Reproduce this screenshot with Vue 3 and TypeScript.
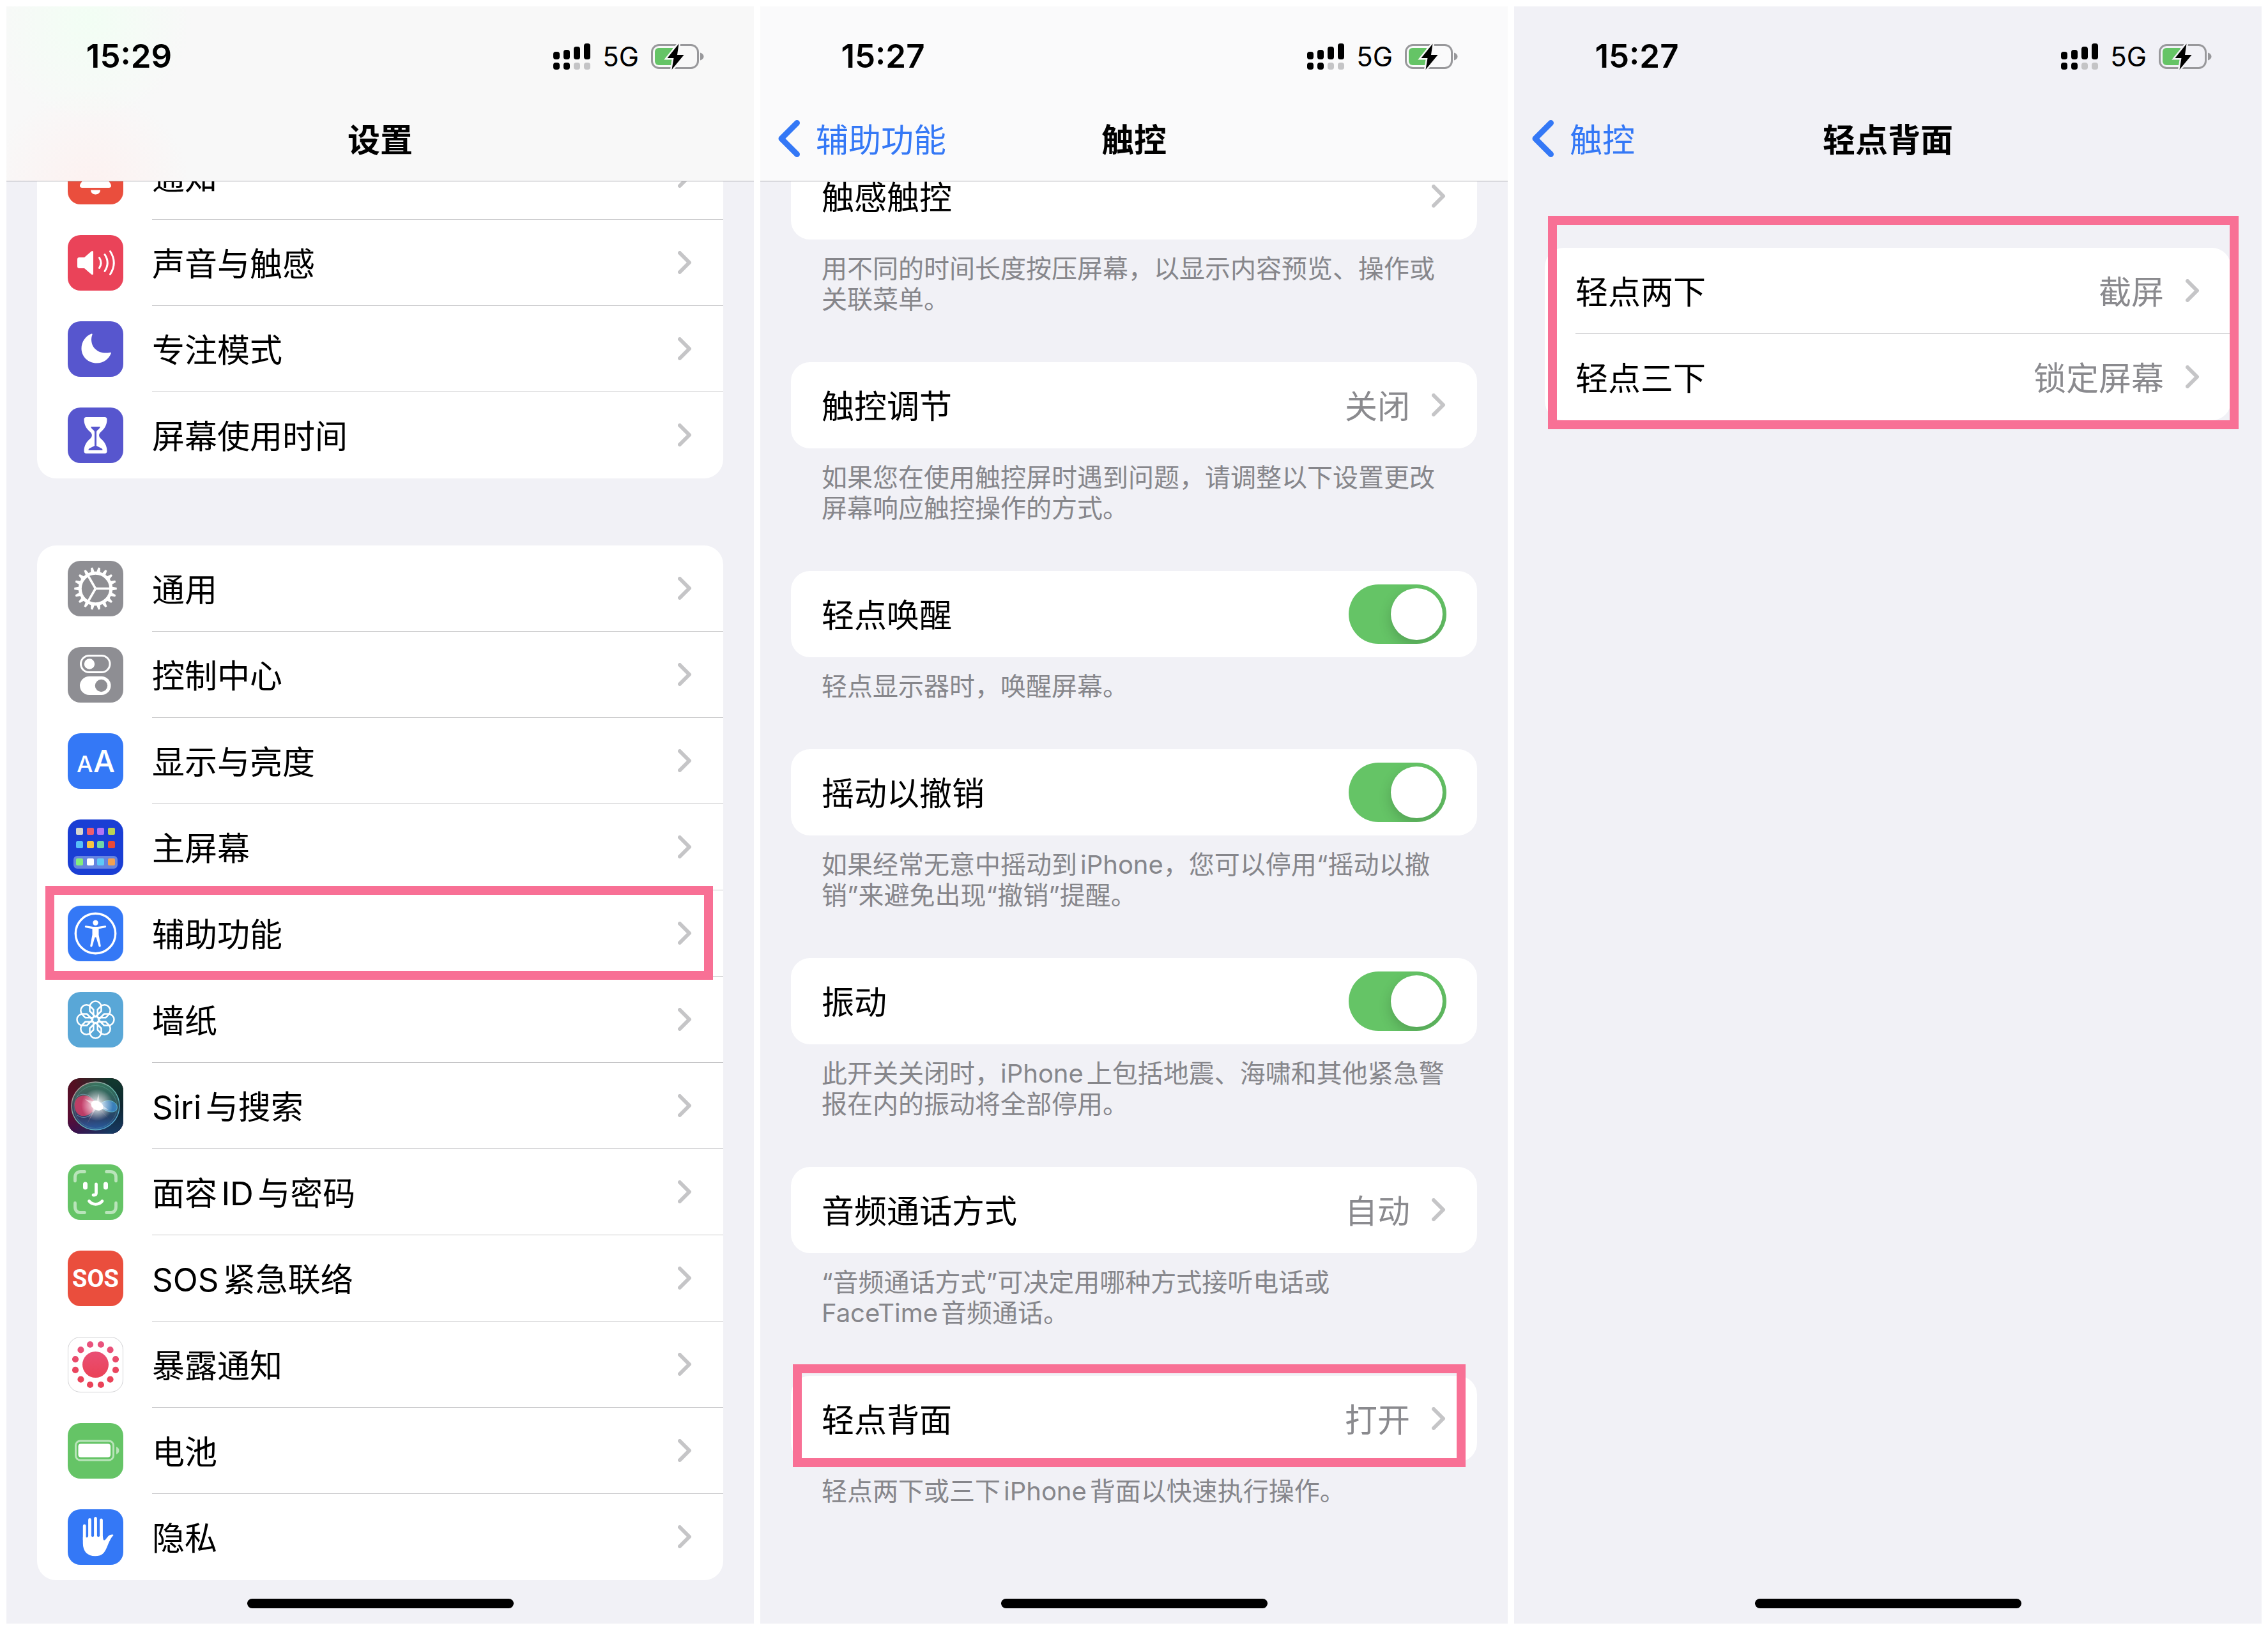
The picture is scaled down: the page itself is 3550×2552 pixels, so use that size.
<script setup lang="ts">
type IconName =
  | 'bell' | 'sound' | 'moon' | 'hourglass' | 'gear' | 'control' | 'display' | 'home'
  | 'access' | 'wallpaper' | 'siri' | 'faceid' | 'sos' | 'exposure' | 'battery' | 'hand'

interface Row {
  label: string
  icon?: IconName
  color?: string
  value?: string
  toggle?: boolean
  mark?: string
}

interface Group {
  rows: Row[]
  footer?: string
  mark?: string
}

interface Screen {
  id: string
  time: string
  title: string
  back?: string
  groups: Group[]
}

const screens: Screen[] = [
  {
    id: 'settings',
    time: '15:29',
    title: '设置',
    groups: [
      {
        rows: [
          { label: '通知', icon: 'bell', color: '#ea4e3d' },
          { label: '声音与触感', icon: 'sound', color: '#ea4359' },
          { label: '专注模式', icon: 'moon', color: '#5756ce' },
          { label: '屏幕使用时间', icon: 'hourglass', color: '#5756ce' },
        ],
      },
      {
        rows: [
          { label: '通用', icon: 'gear', color: '#8e8e93' },
          { label: '控制中心', icon: 'control', color: '#8e8e93' },
          { label: '显示与亮度', icon: 'display', color: '#3478f6' },
          { label: '主屏幕', icon: 'home', color: '#1a3ed4' },
          { label: '辅助功能', icon: 'access', color: '#3478f6', mark: 'mark-access' },
          { label: '墙纸', icon: 'wallpaper', color: '#59a7d7' },
          { label: 'Siri与搜索', icon: 'siri', color: '#1b1f36' },
          { label: '面容ID与密码', icon: 'faceid', color: '#65c466' },
          { label: 'SOS紧急联络', icon: 'sos', color: '#ea4e3d' },
          { label: '暴露通知', icon: 'exposure', color: '#ffffff' },
          { label: '电池', icon: 'battery', color: '#65c466' },
          { label: '隐私', icon: 'hand', color: '#3478f6' },
        ],
      },
    ],
  },
  {
    id: 'touch',
    time: '15:27',
    title: '触控',
    back: '辅助功能',
    groups: [
      { rows: [{ label: '触感触控' }], footer: '用不同的时间长度按压屏幕，以显示内容预览、操作或关联菜单。' },
      { rows: [{ label: '触控调节', value: '关闭' }], footer: '如果您在使用触控屏时遇到问题，请调整以下设置更改屏幕响应触控操作的方式。' },
      { rows: [{ label: '轻点唤醒', toggle: true }], footer: '轻点显示器时，唤醒屏幕。' },
      { rows: [{ label: '摇动以撤销', toggle: true }], footer: '如果经常无意中摇动到iPhone，您可以停用“摇动以撤销”来避免出现“撤销”提醒。' },
      { rows: [{ label: '振动', toggle: true }], footer: '此开关关闭时，iPhone上包括地震、海啸和其他紧急警报在内的振动将全部停用。' },
      { rows: [{ label: '音频通话方式', value: '自动' }], footer: '“音频通话方式”可决定用哪种方式接听电话或\nFaceTime音频通话。' },
      { rows: [{ label: '轻点背面', value: '打开' }], footer: '轻点两下或三下iPhone背面以快速执行操作。', mark: 'mark-back' },
    ],
  },
  {
    id: 'backtap',
    time: '15:27',
    title: '轻点背面',
    back: '触控',
    groups: [
      {
        rows: [
          { label: '轻点两下', value: '截屏' },
          { label: '轻点三下', value: '锁定屏幕' },
        ],
        mark: 'mark-taps',
      },
    ],
  },
]

const teeth = Array.from({ length: 18 }, (_, i) => i * 20)
const spokes = [0, 120, 240]
const petals = Array.from({ length: 8 }, (_, i) => i * 45)
const dots = Array.from({ length: 12 }, (_, i) => 15 + i * 30)
const tileX = [13, 30, 46, 63]
const tiles = [
  { y: 13, colors: ['#d6d6ce', '#ee5d6c', '#b074f5', '#b9d253'] },
  { y: 34, colors: ['#58bff8', '#f6c344', '#70d6a6', '#e9493a'] },
  { y: 61, colors: ['#83ee7c', '#ffffff', '#5ec9f8', '#f3a152'] },
]
</script>

<template>
  <div class="board">
    <section v-for="screen in screens" :key="screen.id" class="phone" :class="screen.id">
      <header class="top">
        <div class="status">
          <span class="time">{{ screen.time }}</span>
          <div class="status-right">
            <svg class="signal" viewBox="0 0 58 41" width="58" height="41">
              <rect x="0" y="13" width="10" height="12" rx="4" />
              <rect x="16" y="10" width="10" height="15" rx="4" />
              <rect x="32" y="5" width="10" height="20" rx="4" />
              <rect x="48" y="0" width="10" height="25" rx="4" />
              <rect x="0" y="30" width="10" height="11" rx="4" />
              <rect x="16" y="30" width="10" height="11" rx="4" />
              <rect x="32" y="30" width="10" height="11" rx="4" fill="#c4c4c6" />
              <rect x="48" y="30" width="10" height="11" rx="4" fill="#c4c4c6" />
            </svg>
            <span class="net">5G</span>
            <svg class="power" viewBox="0 0 83 43" width="83" height="43">
              <rect x="1.5" y="3.5" width="72" height="36" rx="11" fill="none" stroke="#98989b" stroke-width="3" />
              <path d="M77 15.500c3.500 1.200 5.500 3.300 5.500 6s-2 4.800-5.500 6z" fill="#98989b" />
              <path d="M12 8h22v27H12a6 6 0 0 1-6-6V14a6 6 0 0 1 6-6z" fill="#65c466" />
              <path class="bolt" d="M43.500 1.500 25.500 24H35.500L32.500 42 51.500 19H41z" />
            </svg>
          </div>
        </div>
        <nav class="nav">
          <a v-if="screen.back" class="back" href="#">
            <svg viewBox="0 0 34 58" width="34" height="58">
              <path d="M29.500 4.500 5 29l24.500 24.500" fill="none" stroke="currentColor" stroke-width="9" stroke-linecap="round" stroke-linejoin="round" />
            </svg>
            <span class="back-label">{{ screen.back }}</span>
          </a>
          <h1 class="title">{{ screen.title }}</h1>
        </nav>
      </header>

      <main class="content">
        <div v-for="(group, g) in screen.groups" :key="g" class="group">
          <div class="card">
            <component
              :is="row.toggle ? 'label' : 'a'"
              v-for="row in group.rows"
              :key="row.label"
              class="row"
              :href="row.toggle ? undefined : '#'"
            >
              <svg v-if="row.icon" class="icon" viewBox="0 0 87 87" width="87" height="87">
                <rect width="87" height="87" rx="20" :fill="row.color" />
                <g v-if="row.icon === 'bell'" fill="#fff">
                  <path d="M43.500 14c-12 0-18 9-18 20v10c0 6-6.500 9-6.500 14 0 2 1.500 3 3.500 3h42c2 0 3.500-1 3.500-3 0-5-6.500-8-6.500-14V34c0-11-6-20-18-20z" />
                  <path d="M36 64.500h15c0 4-3.300 7-7.500 7s-7.500-3-7.500-7z" />
                </g>
                <g v-else-if="row.icon === 'sound'" fill="none" stroke="#fff" stroke-width="3" stroke-linecap="round">
                  <path d="M18 35h8L37 25.500c1.600-1.200 3-.6 3 1.300v33.400c0 1.900-1.400 2.500-3 1.300L26 52h-8c-2 0-3-1-3-3V38c0-2 1-3 3-3z" fill="#fff" stroke="none" />
                  <path d="M49.500 35.500q5 8 0 16M58 30.500q8.500 13 0 26M66.500 25.500q11.500 18 0 36" />
                </g>
                <path v-else-if="row.icon === 'moon'" fill="#fff" d="M37.300 19.500C28 23 21.500 32 21.500 42.500c0 13 10.500 23 24 23 10 0 18.500-6 22.200-15 .5-1.500-.5-2-2-1.600C51 52 37.500 44 37 29c0-3 .5-5.500 1.500-8 .4-1.300-.4-1.800-1.200-1.500z" />
                <g v-else-if="row.icon === 'hourglass'">
                  <path fill="#fff" d="M29 15h29c2 0 3.500 1.500 3.500 3.500C61.500 28 57 34 51.500 38.500 48.300 41.500 48.300 45.500 51.500 48.500 57 53 61.500 59 61.500 68.500c0 2-1.500 3.500-3.500 3.500H29c-2 0-3.500-1.500-3.500-3.500C25.500 59 30 53 35.500 48.500 38.700 45.500 38.700 41.500 35.500 38.500 30 34 25.500 28 25.500 18.500c0-2 1.500-3.500 3.500-3.500z" />
                  <path :fill="row.color" d="M36 30h15c-.6 2.300-2.500 4-4 5.300-1.500 1.200-2 2-2 3.700v21l8 4c1.300.8 1.500 1.800 1.500 3h-22c0-1.200.2-2.200 1.500-3l8-4V39c0-1.700-.5-2.500-2-3.700-1.500-1.300-3.400-3-4-5.300z" />
                </g>
                <g v-else-if="row.icon === 'gear'" fill="none" stroke="#fff">
                  <circle cx="43.500" cy="43.500" r="24.200" stroke-width="5" />
                  <path v-for="a in teeth" :key="a" d="M69 40.500 76.800 42v3L69 46.500z" fill="#fff" stroke="none" :transform="`rotate(${a} 43.500 43.500)`" />
                  <path v-for="a in spokes" :key="'s' + a" d="M43.500 43.500H67" stroke-width="3.600" :transform="`rotate(${a} 43.500 43.500)`" />
                </g>
                <g v-else-if="row.icon === 'control'">
                  <rect x="20.500" y="13.500" width="45.500" height="26" rx="13" fill="none" stroke="#fff" stroke-width="3" />
                  <circle cx="34" cy="26.500" r="8.200" fill="#fff" />
                  <rect x="19" y="46" width="48.500" height="29" rx="14.500" fill="#fff" />
                  <circle cx="52.500" cy="60.500" r="9.700" :fill="row.color" />
                </g>
                <text v-else-if="row.icon === 'display'" class="aa" y="61" fill="#fff">
                  <tspan x="14" font-size="36">A</tspan><tspan x="40" font-size="48">A</tspan>
                </text>
                <g v-else-if="row.icon === 'home'">
                  <rect x="9" y="57" width="69" height="20" rx="6" fill="#6684e0" />
                  <template v-for="line in tiles" :key="line.y">
                    <rect v-for="(c, i) in line.colors" :key="c" :x="tileX[i]" :y="line.y" width="11" height="11" rx="2" :fill="c" />
                  </template>
                </g>
                <g v-else-if="row.icon === 'access'" fill="#fff">
                  <circle cx="43.500" cy="43.500" r="31.200" fill="none" stroke="#fff" stroke-width="3.400" />
                  <circle cx="43.500" cy="26.800" r="4.200" />
                  <path d="M28.500 31.200 40 33h7l11.500-1.800c2-.2 2.300 2.700.4 3.100L48.500 36.300v9.200l3.200 17c.4 2.300-2.600 2.900-3.200.8L44.500 49.500h-2l-4 13.800c-.6 2.100-3.600 1.500-3.200-.8l3.200-17v-9.200L28.100 34.300c-1.900-.4-1.600-3.300.4-3.100z" />
                </g>
                <g v-else-if="row.icon === 'wallpaper'" fill="none" stroke="#fff" stroke-width="2.500" stroke-linejoin="round">
                  <path v-for="a in petals" :key="a" d="M43.500 39 34.500 30V23.500a9 9 0 0 1 18 0V30z" :transform="`rotate(${a} 43.500 43.500)`" />
                  <circle cx="43.500" cy="43.500" r="5.500" />
                </g>
                <g v-else-if="row.icon === 'siri'">
                  <defs>
                    <linearGradient id="siri-left" x1="0" y1="0" x2="0" y2="1"><stop offset="0" stop-color="#54101f" /><stop offset=".7" stop-color="#5a0d33" /><stop offset="1" stop-color="#3a1050" /></linearGradient>
                    <linearGradient id="siri-right" x1="0" y1="0" x2="0" y2="1"><stop offset="0" stop-color="#123a2e" /><stop offset=".5" stop-color="#0e2530" /><stop offset="1" stop-color="#173a63" /></linearGradient>
                    <linearGradient id="siri-fade"><stop offset=".1" stop-color="#fff" stop-opacity="0" /><stop offset=".75" stop-color="#fff" /></linearGradient>
                    <mask id="siri-mask"><rect width="87" height="87" fill="url(#siri-fade)" /></mask>
                    <linearGradient id="siri-orb" x1="0" y1="0" x2="0" y2="1"><stop offset="0" stop-color="#3f9070" /><stop offset=".4" stop-color="#3c6a6c" /><stop offset=".75" stop-color="#2c4a78" /><stop offset="1" stop-color="#2c6fbe" /></linearGradient>
                    <linearGradient id="siri-rim" x1="0" y1="0" x2="1" y2="1"><stop offset="0" stop-color="#c58a90" /><stop offset=".5" stop-color="#6db7a8" /><stop offset="1" stop-color="#4a9fd8" /></linearGradient>
                    <radialGradient id="siri-glow"><stop offset="0" stop-color="#fff" /><stop offset=".25" stop-color="#fff" stop-opacity=".9" /><stop offset="1" stop-color="#fff" stop-opacity="0" /></radialGradient>
                    <radialGradient id="siri-red"><stop offset="0" stop-color="#c83c6c" /><stop offset="1" stop-color="#d83b66" stop-opacity=".8" /></radialGradient>
                  </defs>
                  <rect width="87" height="87" rx="20" fill="url(#siri-left)" />
                  <rect width="87" height="87" rx="20" fill="url(#siri-right)" mask="url(#siri-mask)" />
                  <circle cx="43.500" cy="43.500" r="37.500" fill="url(#siri-orb)" fill-opacity=".75" stroke="url(#siri-rim)" stroke-width="1.500" />
                  <circle cx="43.500" cy="45" r="33.500" fill="none" stroke="#6db7a8" stroke-opacity=".35" />
                  <path d="M46 42C38 28 27 25 18 29 10 33 8 45 14 54 21 64 38 60 46 42z" fill="url(#siri-red)" />
                  <path d="M46 42C36 24 22 22 15 29M46 42C40 60 26 66 15 58" fill="none" stroke="#8fb4d8" stroke-opacity=".6" />
                  <path d="M48 43C58 32 72 33 77 43 80 52 68 60 48 43z" fill="#3f8fd8" fill-opacity=".75" stroke="#69d0d8" stroke-opacity=".7" />
                  <path d="M46 44 66 66 52 50zM46 44 30 72 40 52z" fill="#e08aa8" fill-opacity=".6" />
                  <circle cx="46" cy="42" r="25" fill="url(#siri-glow)" fill-opacity=".85" />
                  <path d="M27 33 45 38 48 24 50 39 64 50 48 46 38 54 41 44z" fill="#fff" fill-opacity=".5" />
                  <ellipse cx="46" cy="43" rx="10" ry="7" fill="#fff" transform="rotate(25 46 43)" />
                </g>
                <g v-else-if="row.icon === 'faceid'" fill="none" stroke="#fff" stroke-width="4.800" stroke-linecap="round">
                  <path stroke-opacity=".55" d="M11.500 26v-6c0-5 3-8.500 8.500-8.500h6.500M60.500 11.500H67c5.500 0 8.500 3.500 8.500 8.500v6M75.500 60.500v6c0 5.500-3 9-8.500 9h-6.500M26.500 75.500H20c-5.500 0-8.500-3.500-8.500-9v-6" />
                  <path stroke-width="7" d="M27.500 31v5M59.500 31v5" />
                  <path d="M44.500 31v14c0 2-1 3-3 3h-1.500M33.500 57.500c5.500 6.500 15 6.500 20.500 0" />
                </g>
                <text v-else-if="row.icon === 'sos'" class="sos" x="43.500" y="57" text-anchor="middle" fill="#fff">SOS</text>
                <g v-else-if="row.icon === 'exposure'">
                  <defs>
                    <linearGradient id="exposure-red" gradientUnits="userSpaceOnUse" x1="0" y1="8" x2="0" y2="60"><stop offset="0" stop-color="#e95480" /><stop offset="1" stop-color="#ea4359" /></linearGradient>
                  </defs>
                  <rect x=".5" y=".5" width="86" height="86" rx="19.500" fill="#fff" stroke="#d0d0d3" />
                  <g fill="url(#exposure-red)">
                    <circle cx="43.500" cy="43.500" r="20.500" />
                    <circle v-for="a in dots" :key="a" :cx="43.5 + 32.6 * Math.cos((a * Math.PI) / 180)" :cy="43.5 + 32.6 * Math.sin((a * Math.PI) / 180)" r="5.100" />
                  </g>
                </g>
                <g v-else-if="row.icon === 'battery'">
                  <rect x="12.500" y="28" width="59" height="30" rx="7" fill="none" stroke="#fff" stroke-opacity=".55" stroke-width="3" />
                  <rect x="16.500" y="32.500" width="50.500" height="21" rx="4" fill="#fff" />
                  <path d="M76 37c3 1.300 4.500 3.500 4.500 6s-1.500 4.700-4.500 6z" fill="#fff" fill-opacity=".55" />
                </g>
                <g v-else-if="row.icon === 'hand'" fill="#fff">
                  <path d="M26.200 26v22M34.500 16.500V48M43.500 14.500V48M52.500 17V48" stroke="#fff" stroke-width="4.800" stroke-linecap="round" />
                  <path d="M23.800 43.500h4.800c1 1.200 2.600 1 3.500-1.500h4.800c.9 1.500 3.300 1.500 4.200 0h4.800c.9 1.500 3.300 1.500 4.200 0h4.800l.6 4.500c.5 2.500 2 2.600 3.500 1L63 42.500c2-2.200 5-3.300 8-2.800.6.200.5.800.2 1.300-4 4-6.700 11-9.700 18C57.500 69 53 73.300 43 73.300c-12 0-19.200-7-19.200-20z" />
                </g>
              </svg>
              <span class="body">
                <span class="label">{{ row.label }}</span>
                <span v-if="row.value" class="value">{{ row.value }}</span>
                <input v-if="row.toggle" class="switch" type="checkbox" checked />
                <svg v-else class="chevron" viewBox="0 0 23 36" width="23" height="36">
                  <path d="M3 3l15 15L3 33" fill="none" stroke="#c5c5c7" stroke-width="6" stroke-linecap="round" stroke-linejoin="round" />
                </svg>
              </span>
              <span v-if="row.mark" class="mark" :class="row.mark"></span>
            </component>
            <span v-if="group.mark" class="mark" :class="group.mark"></span>
          </div>
          <p v-if="group.footer" class="footer">{{ group.footer }}</p>
        </div>
      </main>

      <div class="home-bar"></div>
    </section>
  </div>
</template>

<style>
body {
  margin: 0;
  background: #fff;
}
</style>

<style scoped>
.board {
  display: grid;
  grid-template-columns: repeat(3, minmax(0, 1fr));
  gap: 10px;
  padding: 10px;
  background: #fff;
  color: #000;
  font-family: Inter, "Noto Sans CJK SC", sans-serif;
  font-size: 51px;
  line-height: 60px;
  text-autospace: normal;
}

.phone {
  display: flex;
  flex-direction: column;
  overflow: hidden;
  background: #f1f1f6;
}

.top {
  position: relative;
  z-index: 2;
  border-bottom: 1px solid #a9a9ae;
  background: #fafafb;
}

.settings .top {
  background:
    radial-gradient(circle at 130px 20px, #f2fef4 0, rgba(242, 254, 244, 0) 160px),
    radial-gradient(circle at 130px 290px, #fdf1f0 0, rgba(253, 241, 240, 0) 160px),
    #f8f8f8;
}

.backtap .top {
  border-color: transparent;
  background: none;
}

.status {
  display: flex;
  align-items: center;
  justify-content: space-between;
  box-sizing: border-box;
  height: 141px;
  padding: 15px 78px 0 112px;
}

.time {
  width: 160px;
  font-weight: 600;
  text-align: center;
}

.status-right {
  display: flex;
  align-items: center;
  font-size: 42px;
}

.net {
  margin: 0 19px;
  padding-top: 2px;
}

.bolt {
  fill: #000;
  stroke: #f8f8f8;
  stroke-width: 5px;
  paint-order: stroke;
}

.backtap .bolt {
  stroke: #f1f1f6;
}

.nav {
  display: grid;
  grid-template-columns: 1fr auto 1fr;
  align-items: center;
  height: 132px;
}

.back {
  display: flex;
  grid-column: 1;
  align-items: center;
  gap: 25px;
  padding-left: 28px;
  color: #3478f6;
  text-decoration: none;
}

.back-label,
.title,
.label,
.value {
  padding-top: 6px;
}

.title {
  grid-column: 2;
  margin: 0;
  font-size: 51px;
  font-weight: 600;
}

.content {
  display: flex;
  flex-direction: column;
  padding: 0 48px;
}

/* The lists are scrolled part of the way under the bar. */
.settings .content {
  gap: 105px;
  margin-top: -75px;
}

.touch .content {
  gap: 74px;
  margin-top: -44px;
}

.backtap .content {
  margin-top: 104px;
}

.card {
  position: relative;
  border-radius: 30px;
  background: #fff;
}

.row {
  position: relative;
  display: flex;
  align-items: center;
  padding-left: 48px;
  color: inherit;
  text-decoration: none;
}

.icon {
  flex: none;
  margin-right: 45px;
}

.body {
  display: flex;
  flex: 1;
  align-items: center;
  box-sizing: border-box;
  height: 135px;
  padding-right: 48px;
  border-bottom: 1px solid #c6c6c8;
}

.row:last-of-type .body {
  border-bottom-color: transparent;
}

.label {
  flex: 1;
}

.value {
  margin-right: 34px;
  color: #8a8a8e;
}

.chevron {
  flex: none;
}

.aa {
  font-weight: 500;
}

.sos {
  font-family: Roboto, sans-serif;
  font-size: 38px;
  font-weight: 700;
}

.switch {
  display: flex;
  flex: none;
  box-sizing: border-box;
  width: 153px;
  height: 93px;
  margin: 0;
  padding: 6px;
  border-radius: 47px;
  background: #e9e9eb;
  appearance: none;
  overflow: hidden;
}

.switch::before {
  width: 81px;
  height: 81px;
  border-radius: 50%;
  background: #fff;
  box-shadow: 0 8px 20px rgba(0, 0, 0, 0.18);
  content: "";
}

.switch:checked {
  justify-content: flex-end;
  background: #65c466;
}

.footer {
  margin: 0;
  padding: 22px 48px 0;
  color: #86868b;
  font-size: 40px;
  line-height: 48px;
  white-space: pre-line;
}

.mark {
  position: absolute;
  border: 14px solid #f87095;
  pointer-events: none;
}

.mark-access {
  inset: -7px 16px -5px 13px;
}

.mark-back {
  inset: -18px 18px -8px 3px;
}

.mark-taps {
  inset: -50px -12px -14px 5px;
}

.home-bar {
  flex: none;
  align-self: center;
  width: 417px;
  height: 15px;
  margin-top: auto;
  margin-bottom: 24px;
  border-radius: 8px;
  background: #000;
}

.settings .home-bar {
  margin-top: 29px;
}
</style>
